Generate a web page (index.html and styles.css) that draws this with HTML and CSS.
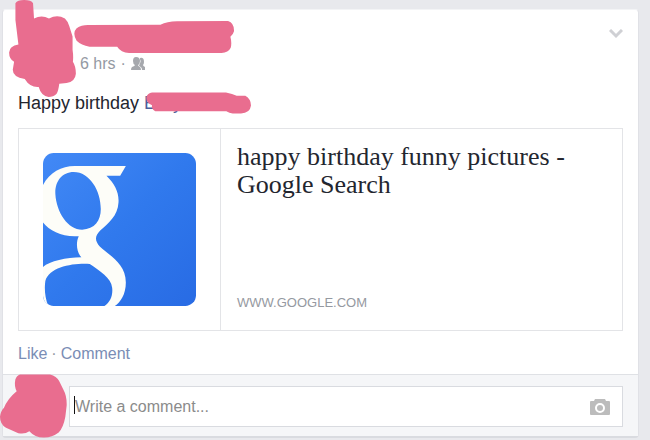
FILE: index.html
```html
<!DOCTYPE html>
<html lang="en">
<head>
  <meta charset="UTF-8">
  <title>Post</title>
  <link rel="stylesheet" href="styles.css">
</head>
<body>
  <article class="post">
    <div class="post-body">
      <header class="post-header">
        <div class="avatar">
          <svg class="scribble scribble-avatar" viewBox="27 0 201 292" aria-hidden="true">
            <path d="M46 10Q52 0 72 0Q94 0 99 10L102 56Q125 44 147 56Q172 42 195 56Q204 65 208 78L218 110V150Q221 170 219 186Q228 200 228 222Q226 246 200 250L178 252Q175 275 170 282Q160 292 146 292Q124 290 116 262Q90 264 74 238Q38 232 38 210L42 186Q27 178 27 158Q28 138 55 134L46 60Z"/>
          </svg>
        </div>
        <div class="byline">
          <div class="author">
            <svg class="scribble scribble-author" viewBox="218 64 485 97" aria-hidden="true">
              <path d="M260 76L480 75Q500 66 530 65L685 64Q704 70 703 95Q700 106 692 112Q697 130 693 145Q686 160 665 161H385Q360 160 349 142H265Q240 138 226 124Q212 100 226 86Q240 76 260 76Z"/>
            </svg>
          </div>
          <div class="meta">
            <span>6 hrs</span><span>·</span>
            <svg class="friends" viewBox="0 0 14 14" role="img" aria-label="Friends">
              <path d="M9 1q4-1 4 4q0 2-1 3q0 1 2 2v3h-3q0-3-3-4q2-4 1-8z"/>
              <path class="front" d="M5 0Q9 0 9 4Q9 7 7 8Q7 9 9 10Q10 11 10 13H0Q0 11 1 10Q4 9 4 8Q2 7 2 4Q2 0 5 0Z"/>
            </svg>
          </div>
        </div>
        <button class="menu" type="button" aria-label="Post options">
          <svg viewBox="0 0 14 10"><path d="M1 1l6 6l6-6"/></svg>
        </button>
      </header>

      <p class="message">Happy birthday
        <span class="tagged"><span>E</span><span>y</span>
          <svg class="scribble scribble-tag" viewBox="440 275 315 65" aria-hidden="true">
            <path d="M458 276H680Q700 280 712 286H738Q755 296 755 315Q752 338 725 339H700Q690 338 681 332H468Q455 325 458 314Q440 306 441 290Q445 278 458 276Z"/>
          </svg>
        </span>
      </p>

      <section class="link-card">
        <div class="thumb">
          <svg viewBox="130 97 458 458" role="img" aria-label="Google">
            <defs>
              <linearGradient id="tile-fill" x1="0" y1="0" x2="1" y2="1">
                <stop offset="0" stop-color="#4289f6"/>
                <stop offset="0.5" stop-color="#3079ed"/>
                <stop offset="1" stop-color="#286be4"/>
              </linearGradient>
              <clipPath id="tile-clip"><rect x="130" y="97" width="458" height="458" rx="32"/></clipPath>
            </defs>
            <g clip-path="url(#tile-clip)">
              <rect x="130" y="97" width="458" height="458" fill="url(#tile-fill)"/>
              <path fill="#fdfdf8" fill-rule="evenodd" d="M225 136H378L361 165H320C345 190 358 215 356 245C354 285 325 308 302 328C285 345 284 358 300 377C325 402 378 425 378 485C378 520 362 545 345 555H314C330 545 340 525 337 500C334 470 300 450 270 429C220 426 150 437 137 480C134 500 135 530 146 555H130V438C150 420 200 410 245 409C230 395 228 365 237 346C190 350 150 330 130 305V193C150 155 185 136 225 136ZM222 154C185 154 165 185 167 220C170 275 205 327 247 327C285 325 303 300 303 265C303 210 270 154 222 154Z"/>
            </g>
          </svg>
        </div>
        <div class="link-text">
          <h2>happy birthday funny pictures - Google Search</h2>
          <span class="domain">WWW.GOOGLE.COM</span>
        </div>
      </section>

      <nav class="actions">
        <a href="#like">Like</a><span>·</span><a href="#comment">Comment</a>
      </nav>
    </div>

    <form class="comment-form">
      <div class="comment-avatar">
        <svg class="scribble scribble-commenter" viewBox="0 134 201 191" aria-hidden="true">
          <path d="M60 135H150Q170 140 177 154L190 180Q201 200 200 228L196 262Q190 295 176 309Q155 325 130 324Q105 324 88 305Q75 315 55 311L18 295Q0 285 0 262Q2 245 12 235Q22 208 50 185Q42 170 46 150Q50 138 60 135Z"/>
        </svg>
      </div>
      <div class="comment-box">
        <input type="text" id="comment" aria-label="Write a comment" placeholder="Write a comment...">
        <span class="caret"></span>
        <button type="button" class="photo" aria-label="Attach a photo">
          <svg viewBox="0 0 20 16">
            <path fill-rule="evenodd" d="M1 2H4L5 0H15L16 2H19Q20 2 20 3V15Q20 16 19 16H1Q0 16 0 15V3Q0 2 1 2ZM10 4A5 5 0 1 0 10 14A5 5 0 1 0 10 4Z"/>
            <circle cx="10" cy="9" r="3"/>
          </svg>
        </button>
      </div>
    </form>
  </article>
</body>
</html>
```

FILE: styles.css
```css
* {
  box-sizing: border-box;
}
body {
  margin: 0;
  padding: 9px 11px 2px 2px;
  background: #e8e9ed;
  font-family: "Liberation Sans", Arial, sans-serif;
  font-size: 16px;
  line-height: 20px;
  color: #23262f;
}
.post {
  background: #fff;
  border: 1px solid #e0e1e6;
  border-top-color: #f3f4f6;
  border-bottom: 2px solid #d9dbe0;
  border-radius: 4px;
}
.post-body {
  padding: 16px 15px 10px;
}
.post-header {
  display: flex;
  gap: 12px;
}
.avatar {
  position: relative;
  width: 50px;
  height: 50px;
}
.byline {
  flex: 1;
}
.author {
  position: relative;
  height: 28px;
}
.meta {
  display: flex;
  align-items: center;
  gap: 5px;
  color: #9499a3;
}
.friends {
  width: 14px;
  height: 14px;
  fill: #a6a8ad;
}
.friends .front {
  stroke: #fff;
  stroke-width: 1;
  paint-order: stroke;
}
button {
  padding: 0;
  border: none;
  background: none;
  cursor: pointer;
}
.menu {
  align-self: flex-start;
  width: 14px;
  height: 16px;
}
.menu svg {
  display: block;
  width: 14px;
  height: 10px;
  fill: none;
  stroke: #cfd0d4;
  stroke-width: 3;
}
.message {
  margin: 17px 0 15px;
  font-size: 18px;
}
.tagged {
  position: relative;
  display: inline-flex;
  gap: 17px;
  color: #4b5f9c;
}

/* pink marker over names and photos */
.scribble {
  position: absolute;
  fill: #e96d8f;
}
.scribble-avatar {
  left: -9px;
  top: -26px;
  width: 67px;
  height: 97px;
}
.scribble-author {
  left: -7px;
  top: -5px;
  width: 162px;
  height: 32px;
}
.scribble-tag {
  left: 2px;
  top: -1px;
  width: 105px;
  height: 22px;
}
.scribble-commenter {
  left: -18px;
  top: -12px;
  width: 67px;
  height: 64px;
}

.link-card {
  display: flex;
  border: 1px solid #e3e4e7;
}
.thumb {
  padding: 24px;
  border-right: 1px solid #e3e4e7;
}
.thumb svg {
  display: block;
  width: 153px;
  height: 153px;
}
.link-text {
  flex: 1;
  display: flex;
  flex-direction: column;
  justify-content: space-between;
  padding: 14px 16px 17px;
}
h2 {
  margin: 0;
  font-family: "Liberation Serif", serif;
  font-size: 26px;
  font-weight: normal;
  line-height: 28px;
}
.domain {
  font-size: 13px;
  color: #9599a1;
}
.actions {
  display: flex;
  gap: 4px;
  padding-top: 13px;
  color: #9499a3;
}
a {
  color: #7a8db5;
  text-decoration: none;
}
.comment-form {
  display: flex;
  gap: 3px;
  padding: 11px 15px 9px;
  border-top: 1px solid #dfe1e5;
  background: #f5f6f8;
}
.comment-avatar {
  position: relative;
  width: 48px;
}
.comment-box {
  position: relative;
  flex: 1;
  display: flex;
  align-items: center;
  height: 41px;
  padding-right: 12px;
  border: 1px solid #d9dbe0;
  background: #fff;
}
.comment-box input {
  flex: 1;
  min-width: 0;
  height: 20px;
  padding: 0 5px;
  border: none;
  outline: none;
  background: none;
  font: inherit;
}
.comment-box input::placeholder {
  color: #8b8b8b;
}
.caret {
  position: absolute;
  left: 4px;
  top: 9px;
  width: 1px;
  height: 18px;
  background: #111;
}
.photo {
  height: 16px;
}
.photo svg {
  display: block;
  width: 20px;
  height: 16px;
  fill: #bcbcbc;
}
```
